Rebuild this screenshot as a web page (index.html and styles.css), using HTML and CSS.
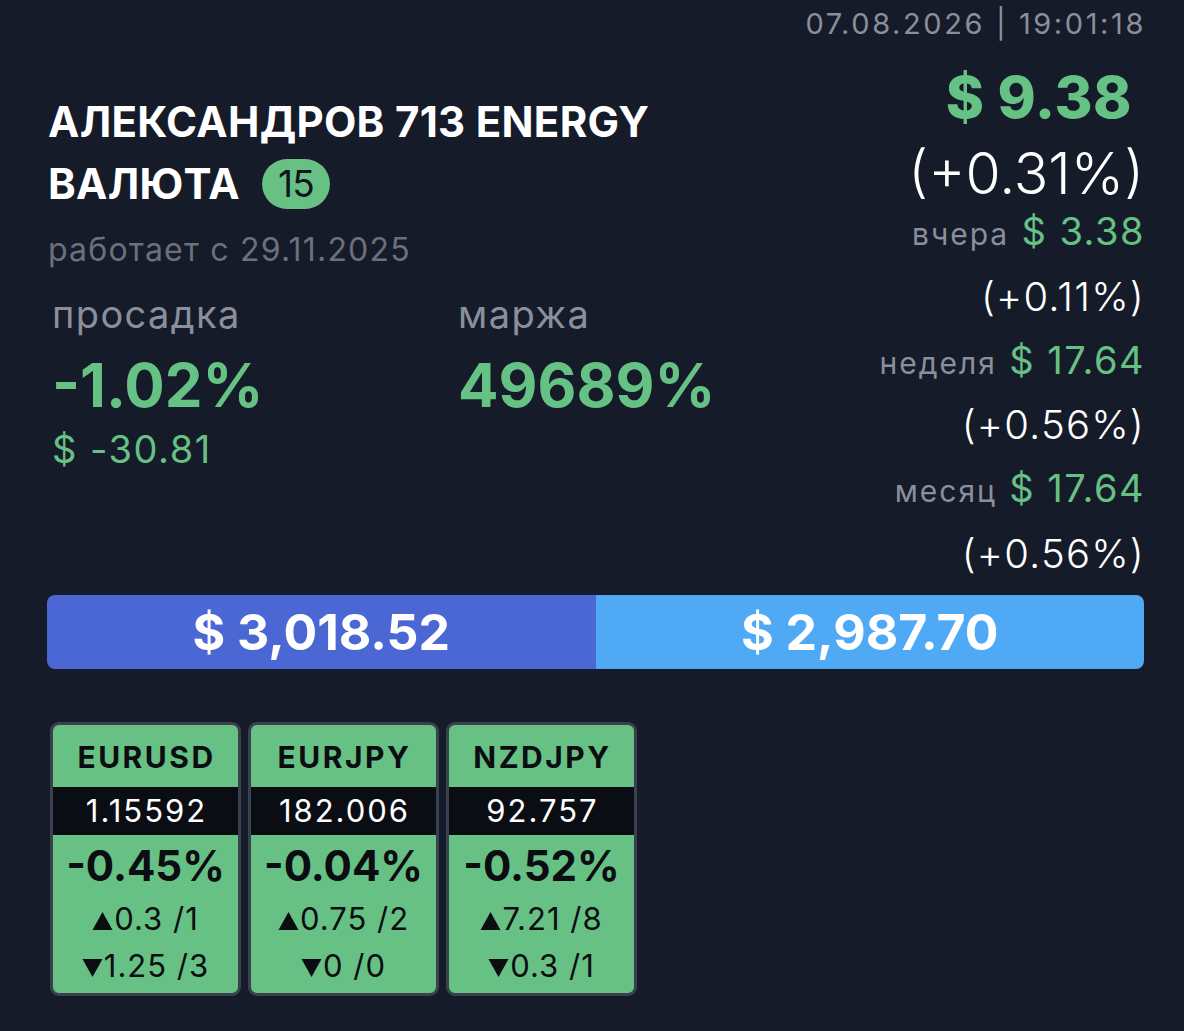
FILE: index.html
```html
<!DOCTYPE html>
<html lang="ru">
<head>
<meta charset="utf-8">
<title>Dashboard</title>
<link rel="stylesheet" href="styles.css">
</head>
<body>
<div class="page">
  <section class="top">
    <div class="left">
      <h1 class="title">АЛЕКСАНДРОВ 713 ENERGY<br>ВАЛЮТА<span class="badge">15</span></h1>
      <div class="since">работает с 29.11.2025</div>
      <div class="stats">
        <div class="stat">
          <div class="stat-label">просадка</div>
          <div class="stat-value">-1.02%</div>
          <div class="stat-sub">$ -30.81</div>
        </div>
        <div class="stat">
          <div class="stat-label">маржа</div>
          <div class="stat-value">49689%</div>
        </div>
      </div>
    </div>
    <div class="right">
      <div class="date">07.08.2026 | 19:01:18</div>
      <div class="profit">$ 9.38</div>
      <div class="profit-pct">(+0.31%)</div>
      <div class="row"><span class="lbl">вчера</span> <span class="val">$ 3.38</span></div>
      <div class="row pct">(+0.11%)</div>
      <div class="row"><span class="lbl">неделя</span> <span class="val">$ 17.64</span></div>
      <div class="row pct">(+0.56%)</div>
      <div class="row"><span class="lbl">месяц</span> <span class="val">$ 17.64</span></div>
      <div class="row pct">(+0.56%)</div>
    </div>
  </section>

  <div class="bar">
    <div class="bar-half balance">$ 3,018.52</div>
    <div class="bar-half equity">$ 2,987.70</div>
  </div>

  <div class="tiles">
    <div class="tile">
      <div class="tile-sym">EURUSD</div>
      <div class="tile-price">1.15592</div>
      <div class="tile-pct">-0.45%</div>
      <div class="tile-line"><svg class="tri" viewBox="0 0 20 18"><path d="M10 0 L20 18 L0 18 Z"/></svg>0.3 /1</div>
      <div class="tile-line"><svg class="tri" viewBox="0 0 20 18"><path d="M0 0 L20 0 L10 18 Z"/></svg>1.25 /3</div>
    </div>
    <div class="tile">
      <div class="tile-sym">EURJPY</div>
      <div class="tile-price">182.006</div>
      <div class="tile-pct">-0.04%</div>
      <div class="tile-line"><svg class="tri" viewBox="0 0 20 18"><path d="M10 0 L20 18 L0 18 Z"/></svg>0.75 /2</div>
      <div class="tile-line"><svg class="tri" viewBox="0 0 20 18"><path d="M0 0 L20 0 L10 18 Z"/></svg>0 /0</div>
    </div>
    <div class="tile">
      <div class="tile-sym">NZDJPY</div>
      <div class="tile-price">92.757</div>
      <div class="tile-pct">-0.52%</div>
      <div class="tile-line"><svg class="tri" viewBox="0 0 20 18"><path d="M10 0 L20 18 L0 18 Z"/></svg>7.21 /8</div>
      <div class="tile-line"><svg class="tri" viewBox="0 0 20 18"><path d="M0 0 L20 0 L10 18 Z"/></svg>0.3 /1</div>
    </div>
  </div>
</div>
</body>
</html>
```

FILE: styles.css
```css
html, body {
  margin: 0;
  padding: 0;
  background: #161b2a;
}
body {
  font-family: Inter, "Liberation Sans", sans-serif;
  color: #ffffff;
  height: 1031px;
  overflow: hidden;
}
.page {
  padding: 0 40px 0 47px;
}
.top {
  display: flex;
  justify-content: space-between;
  height: 595px;
}
.left {
  padding-top: 91px;
  flex: 1 1 auto;
  min-width: 0;
}
.title {
  margin: 0;
  font-size: 42px;
  font-weight: 700;
  line-height: 62px;
  padding-left: 1px;
  letter-spacing: 0.3px;
  white-space: nowrap;
}
.badge {
  display: inline-block;
  vertical-align: middle;
  margin-left: 22px;
  margin-top: -8px;
  width: 68px;
  height: 50px;
  line-height: 50px;
  border-radius: 25px;
  background: #67c184;
  color: #10141c;
  font-weight: 400;
  font-size: 37px;
  text-align: center;
  letter-spacing: -1px;
}
.since {
  margin-top: 15px;
  font-size: 32px;
  line-height: 40px;
  color: #6b707d;
  padding-left: 1px;
  letter-spacing: 1.2px;
}
.stats {
  display: flex;
  margin-top: 20px;
  padding-left: 5px;
}
.stat:first-child {
  width: 406px;
}
.stat-label {
  font-size: 38px;
  line-height: 48px;
  color: #8a8f9b;
  letter-spacing: 1.4px;
}
.stat-value {
  margin-top: 12px;
  font-size: 60px;
  font-weight: 700;
  line-height: 70px;
  color: #66c184;
}
.stat-sub {
  margin-top: 5px;
  font-size: 38px;
  line-height: 48px;
  color: #66c184;
  letter-spacing: 1.5px;
}
.right {
  flex: 0 0 auto;
  display: flex;
  flex-direction: column;
  align-items: flex-end;
  white-space: nowrap;
}
.date {
  font-size: 29px;
  line-height: 44px;
  color: #8a8f9b;
  padding-top: 2px;
  letter-spacing: 2.6px;
  margin-right: -2px;
}
.profit {
  font-size: 58px;
  font-weight: 800;
  line-height: 102px;
  color: #66c184;
  padding-right: 12px;
  letter-spacing: 0.5px;
}
.profit-pct {
  font-size: 57px;
  line-height: 52px;
  font-weight: 300;
}
.row {
  font-size: 38px;
  line-height: 62.8px;
  font-weight: 300;
  letter-spacing: 1.5px;
  margin-right: -1px;
}
.row.pct {
  font-size: 40px;
  letter-spacing: 1.2px;
}
.lbl {
  font-size: 30px;
  color: #8a8f9b;
  font-weight: 400;
  letter-spacing: 2px;
}
.val {
  color: #66c184;
  font-weight: 400;
}
.bar {
  display: flex;
  height: 74px;
  border-radius: 8px;
  overflow: hidden;
}
.bar-half {
  flex: 1;
  display: flex;
  align-items: center;
  justify-content: center;
  font-size: 50px;
  font-weight: 700;
  color: #ffffff;
}
.balance {
  background: #4a67d3;
}
.equity {
  background: #4fa9f5;
}
.tiles {
  display: flex;
  gap: 7px;
  margin-top: 53px;
  padding-left: 3px;
}
.tile {
  width: 185px;
  border: 3px solid #3b404e;
  border-radius: 9px;
  background: #67c184;
  color: #0b0d12;
  text-align: center;
  overflow: hidden;
  padding-bottom: 4px;
}
.tile-sym {
  height: 62px;
  line-height: 64px;
  font-size: 30px;
  font-weight: 700;
  letter-spacing: 2.5px;
  text-indent: 2px;
}
.tile-price {
  height: 48px;
  line-height: 48px;
  background: #0b0d15;
  color: #ffffff;
  font-size: 31px;
  letter-spacing: 2px;
  text-indent: 2px;
}
.tile-pct {
  height: 60px;
  line-height: 62px;
  font-size: 42px;
  font-weight: 700;
}
.tile-line {
  height: 47px;
  line-height: 47px;
  font-size: 31px;
  letter-spacing: 1px;
}
.tri {
  width: 21px;
  height: 18px;
  fill: #0b0d12;
  vertical-align: 0;
  margin-right: 1px;
}
```
